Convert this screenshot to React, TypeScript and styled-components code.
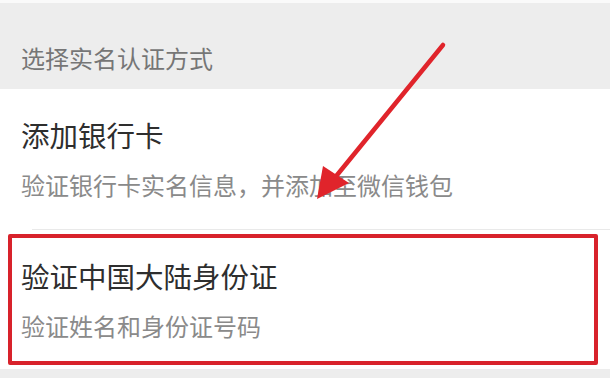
import { FC } from 'react';
import styled, { createGlobalStyle } from 'styled-components';

const GlobalStyle = createGlobalStyle`
    html, body {
        margin: 0;
        padding: 0;
        background-color: #ededed;
    }
`;

const Page = styled.div`
    position: relative;
    width: 610px;
    height: 378px;
    overflow: hidden;
    background-color: #ededed;
    font-family: 'Noto Sans CJK SC', 'Noto Sans', sans-serif;
`;

const TopStrip = styled.div`
    height: 3px;
    background-color: #fafafa;
`;

// "选择实名认证方式"
const SectionHeader = styled.div`
    box-sizing: border-box;
    height: 86px;
    padding: 39px 0 0 21px;
    font-size: 24px;
    line-height: 32px;
    color: #767676;
`;

const List = styled.div`
    background-color: #ffffff;
`;

const Item = styled.div<{ $height: number }>`
    box-sizing: border-box;
    height: ${p => p.$height}px;
    padding: 28px 0 0 21px;
    display: flex;
    flex-direction: column;
`;

const Title = styled.div`
    font-size: 28.5px;
    line-height: 36px;
    color: #2e2e2e;
`;

const Desc = styled.div`
    margin-top: 16px;
    font-size: 24px;
    line-height: 32px;
    color: #8a8a8a;
`;

const Divider = styled.div`
    height: 1px;
    margin-left: 32px;
    background-color: #e9e9e9;
`;

// adnotacje - czerwona ramka + strzałka
const Highlight = styled.div`
    position: absolute;
    left: 8px;
    top: 234px;
    width: 590px;
    height: 131px;
    box-sizing: border-box;
    border: 4px solid #d8222b;
    border-radius: 2px;
`;

const Arrow = styled.svg`
    position: absolute;
    left: 0;
    top: 0;
`;

const App: FC = () => {
    return (
        <Page>
            <GlobalStyle />
            <TopStrip />
            <SectionHeader>选择实名认证方式</SectionHeader>
            <List>
                <Item $height={140}>
                    <Title>添加银行卡</Title>
                    <Desc>验证银行卡实名信息，并添加至微信钱包</Desc>
                </Item>
                <Divider />
                <Item $height={139}>
                    <Title>验证中国大陆身份证</Title>
                    <Desc>验证姓名和身份证号码</Desc>
                </Item>
            </List>
            <Highlight />
            <Arrow width="610" height="378" viewBox="0 0 610 378">
                <line x1="443" y1="45" x2="333" y2="180" stroke="#e0242b" strokeWidth="4.5" strokeLinecap="round" />
                <polygon points="317,199 323,166 349,183" fill="#e0242b" />
            </Arrow>
        </Page>
    );
};

export default App;
